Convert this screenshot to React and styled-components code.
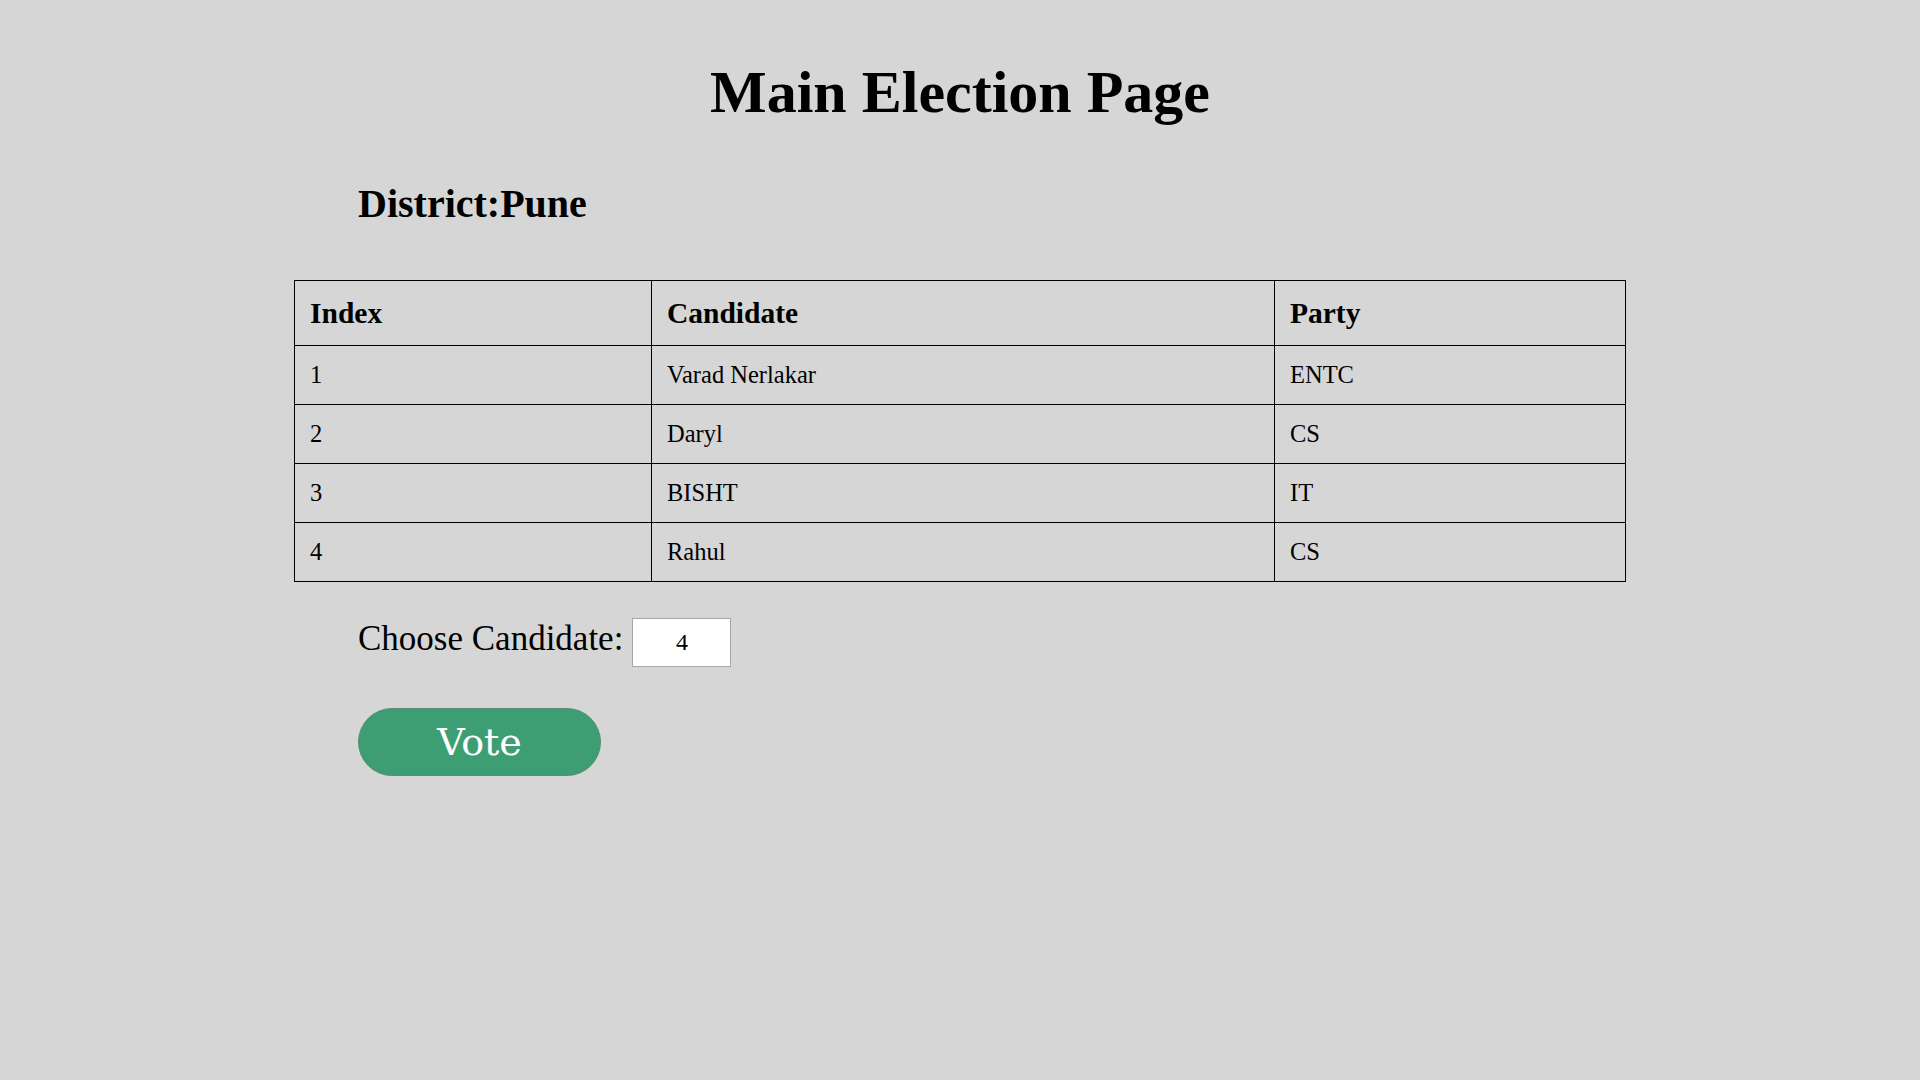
import React from "react";
import styled, { createGlobalStyle } from "styled-components";

const GlobalStyle = createGlobalStyle`
  html, body {
    margin: 0;
    padding: 0;
    background: #d6d6d6;
  }
  body {
    font-family: "Liberation Serif", "Times New Roman", serif;
    color: #000;
  }
  #root {
    min-height: 100vh;
  }
`;

const Page = styled.div`
  min-height: 100vh;
  padding-top: 58px;
  box-sizing: border-box;
  background: #d6d6d6;
`;

const Title = styled.h1`
  margin: 0;
  font-family: "Liberation Serif", "Times New Roman", serif;
  font-size: 60px;
  line-height: 69px;
  font-weight: bold;
  text-align: center;
`;

const Section = styled.div`
  padding-left: 358px;
  margin-top: ${(p) => p.$top || 0}px;
`;

const District = styled.h2`
  margin: 0;
  font-size: 40px;
  line-height: 46px;
  font-weight: bold;
`;

const Table = styled.table`
  width: 1331px;
  margin: 53px auto 0;
  border-collapse: collapse;
  table-layout: fixed;
`;

const HeadCell = styled.th`
  border: 1px solid #000;
  padding: 15px;
  text-align: left;
  font-size: 29.5px;
  line-height: 34px;
  font-weight: bold;
`;

const Cell = styled.td`
  border: 1px solid #000;
  padding: 15px;
  text-align: left;
  font-size: 24.5px;
  line-height: 28px;
`;

const ChooseRow = styled.div`
  display: flex;
  align-items: baseline;
  gap: 9px;
`;

const Label = styled.label`
  font-size: 35px;
  line-height: 40px;
`;

const NumberInput = styled.input`
  box-sizing: border-box;
  width: 99px;
  height: 49px;
  padding: 0 4px;
  border: 1px solid #a6a6a6;
  background: #fff;
  font-family: "Liberation Serif", "Times New Roman", serif;
  font-size: 24px;
  text-align: center;
  color: #000;
  outline: none;
`;

const VoteButton = styled.button`
  display: block;
  box-sizing: border-box;
  margin-top: 41px;
  width: 243px;
  height: 68px;
  border: 1px solid #5f8a76;
  border-radius: 34px;
  background: #3d9e74;
  color: #fff;
  font-family: "DejaVu Serif", Georgia, serif;
  font-size: 38px;
  line-height: 1;
  cursor: pointer;
  padding: 0;
`;

const candidates = [
  { index: 1, name: "Varad Nerlakar", party: "ENTC" },
  { index: 2, name: "Daryl", party: "CS" },
  { index: 3, name: "BISHT", party: "IT" },
  { index: 4, name: "Rahul", party: "CS" },
];

export default function App() {
  const [choice, setChoice] = React.useState("4");
  return (
    <>
      <GlobalStyle />
      <Page>
        <Title>Main Election Page</Title>
        <Section $top={54}>
          <District>District:Pune</District>
        </Section>
        <Table>
          <colgroup>
            <col style={{ width: "357px" }} />
            <col style={{ width: "623px" }} />
            <col style={{ width: "351px" }} />
          </colgroup>
          <thead>
            <tr>
              <HeadCell>Index</HeadCell>
              <HeadCell>Candidate</HeadCell>
              <HeadCell>Party</HeadCell>
            </tr>
          </thead>
          <tbody>
            {candidates.map((c) => (
              <tr key={c.index}>
                <Cell>{c.index}</Cell>
                <Cell>{c.name}</Cell>
                <Cell>{c.party}</Cell>
              </tr>
            ))}
          </tbody>
        </Table>
        <Section $top={36}>
          <ChooseRow>
            <Label htmlFor="choice">Choose Candidate:</Label>
            <NumberInput
              id="choice"
              value={choice}
              onChange={(e) => setChoice(e.target.value)}
            />
          </ChooseRow>
          <VoteButton>Vote</VoteButton>
        </Section>
      </Page>
    </>
  );
}
